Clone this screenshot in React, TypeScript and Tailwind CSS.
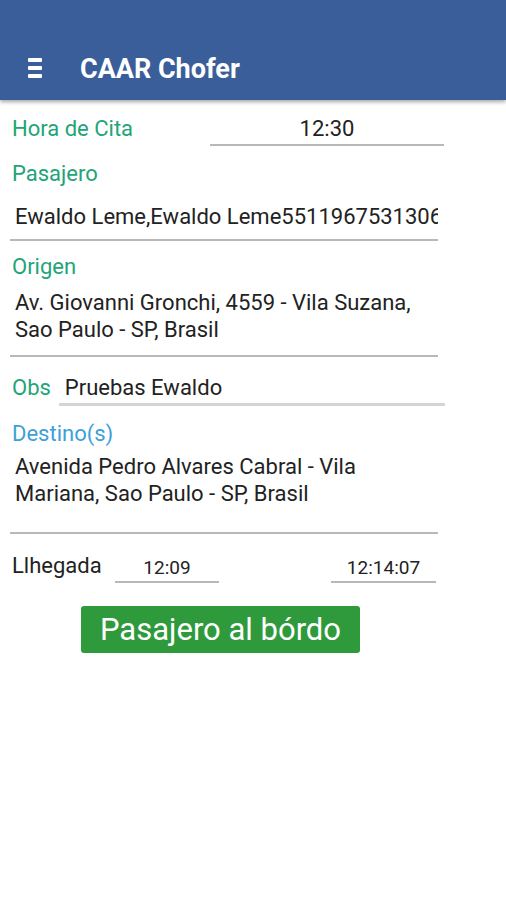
import React from "react";

export default function App() {
  return (
    <div className="w-[506px] h-[900px] bg-white relative overflow-hidden" style={{ fontFamily: "Roboto, 'Noto Sans', sans-serif" }}>
      <div className="h-[100px] bg-[#3a5e9a] flex items-end pb-[17px] shadow-[0_2px_4px_rgba(0,0,0,0.35)] relative z-10">
        <div className="ml-[28px] mb-[5px] flex flex-col gap-[4px] w-[14px]">
          <div className="h-[4px] bg-white rounded-[1px]" />
          <div className="h-[4px] bg-white rounded-[1px]" />
          <div className="h-[4px] bg-white rounded-[1px]" />
        </div>
        <div className="ml-[38px] text-white text-[27px] font-bold leading-none">CAAR Chofer</div>
      </div>

      <div className="flex flex-col">
        <div className="flex items-end mt-[18px]">
          <div className="ml-[12px] text-[22px] text-[#22a478] leading-none w-[198px] pb-[6px]">Hora de Cita</div>
          <div className="w-[234px] border-b-[2px] border-[#b8b8b8] text-center text-[22px] text-[#222] leading-none pb-[4px]">12:30</div>
        </div>

        <div className="ml-[12px] mt-[17px] text-[22px] text-[#22a478] leading-none">Pasajero</div>
        <div className="ml-[10px] w-[428px] mt-[21px] border-b-[2px] border-[#b8b8b8] pb-[11px] pl-[5px] overflow-hidden whitespace-nowrap text-[22px] text-[#222] leading-none">
          Ewaldo Leme,Ewaldo Leme55119675313064
        </div>

        <div className="ml-[12px] mt-[15px] text-[22px] text-[#22a478] leading-none">Origen</div>
        <div className="ml-[10px] w-[428px] mt-[11px] border-b-[2px] border-[#b8b8b8] pb-[12px] pl-[5px] text-[22px] text-[#222] leading-[27px]">
          Av. Giovanni Gronchi, 4559 - Vila Suzana,<br />Sao Paulo - SP, Brasil
        </div>

        <div className="flex items-end mt-[20px]">
          <div className="ml-[12px] text-[22px] text-[#22a478] leading-none pb-[7px]">Obs</div>
          <div className="ml-[8px] w-[386px] border-b-[3px] border-[#d4d4d4] pl-[6px] pb-[4px] text-[22px] text-[#222] leading-none">Pruebas Ewaldo</div>
        </div>

        <div className="ml-[12px] mt-[17px] text-[22px] text-[#3ea0d8] leading-none">Destino(s)</div>
        <div className="ml-[10px] w-[428px] mt-[8px] border-b-[2px] border-[#b8b8b8] pb-[25px] pl-[5px] text-[22px] text-[#222] leading-[27px]">
          Avenida Pedro Alvares Cabral - Vila<br />Mariana, Sao Paulo - SP, Brasil
        </div>

        <div className="flex items-end mt-[21px]">
          <div className="ml-[12px] text-[22px] text-[#222] leading-none w-[103px] pb-[6px]">Llhegada</div>
          <div className="w-[104px] border-b-[2px] border-[#b8b8b8] text-center text-[19px] text-[#222] leading-none pb-[4px]">12:09</div>
          <div className="ml-[112px] w-[105px] border-b-[2px] border-[#b8b8b8] text-center text-[19px] text-[#222] leading-none pb-[4px]">12:14:07</div>
        </div>

        <div className="ml-[81px] mt-[23px] w-[279px] h-[47px] bg-[#2e9a3b] rounded-[3px] flex items-center justify-center text-white text-[31px] leading-none">
          Pasajero al bórdo
        </div>
      </div>
    </div>
  );
}
